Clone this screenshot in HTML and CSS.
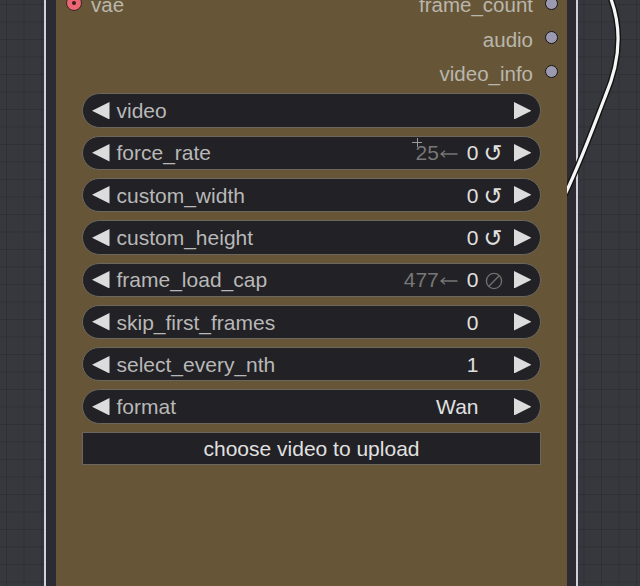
FILE: index.html
```html
<!DOCTYPE html>
<html>
<head>
<meta charset="utf-8">
<link rel="stylesheet" href="styles.css">
</head>
<body>
<div class="canvas">
  <div class="selection">
    <div class="node">
      <div class="slots">
        <div class="slot-row">
          <div class="slot-in"><span class="dot dot-vae"></span><span class="slot-label">vae</span></div>
          <div class="slot-out"><span class="slot-label">frame_count</span><span class="dot"></span></div>
        </div>
        <div class="slot-row">
          <div class="slot-in"></div>
          <div class="slot-out"><span class="slot-label">audio</span><span class="dot"></span></div>
        </div>
        <div class="slot-row">
          <div class="slot-in"></div>
          <div class="slot-out"><span class="slot-label">video_info</span><span class="dot"></span></div>
        </div>
      </div>
      <div class="widgets">
        <div class="pill">
          <svg class="arr" viewBox="0 0 17.5 17.5"><polygon points="17.5,0 0,8.75 17.5,17.5"/></svg>
          <span class="label">video</span>
          <span class="fill"></span>
          <span class="icon"></span>
          <svg class="arr" viewBox="0 0 17.5 17.5"><polygon points="0,0 17.5,8.75 0,17.5"/></svg>
        </div>
        <div class="pill">
          <svg class="arr" viewBox="0 0 17.5 17.5"><polygon points="17.5,0 0,8.75 17.5,17.5"/></svg>
          <span class="label">force_rate</span>
          <span class="fill"></span>
          <span class="hint">25<svg class="larrow" viewBox="0 0 18 10"><path d="M17.5,5 H1 M5,1.8 L1,5 L5,8.2"/></svg></span>
          <span class="val">0</span>
          <span class="icon">↺</span>
          <svg class="arr" viewBox="0 0 17.5 17.5"><polygon points="0,0 17.5,8.75 0,17.5"/></svg>
        </div>
        <div class="pill">
          <svg class="arr" viewBox="0 0 17.5 17.5"><polygon points="17.5,0 0,8.75 17.5,17.5"/></svg>
          <span class="label">custom_width</span>
          <span class="fill"></span>
          <span class="val">0</span>
          <span class="icon">↺</span>
          <svg class="arr" viewBox="0 0 17.5 17.5"><polygon points="0,0 17.5,8.75 0,17.5"/></svg>
        </div>
        <div class="pill">
          <svg class="arr" viewBox="0 0 17.5 17.5"><polygon points="17.5,0 0,8.75 17.5,17.5"/></svg>
          <span class="label">custom_height</span>
          <span class="fill"></span>
          <span class="val">0</span>
          <span class="icon">↺</span>
          <svg class="arr" viewBox="0 0 17.5 17.5"><polygon points="0,0 17.5,8.75 0,17.5"/></svg>
        </div>
        <div class="pill">
          <svg class="arr" viewBox="0 0 17.5 17.5"><polygon points="17.5,0 0,8.75 17.5,17.5"/></svg>
          <span class="label">frame_load_cap</span>
          <span class="fill"></span>
          <span class="hint">477<svg class="larrow" viewBox="0 0 18 10"><path d="M17.5,5 H1 M5,1.8 L1,5 L5,8.2"/></svg></span>
          <span class="val">0</span>
          <span class="icon"><svg class="noicon" viewBox="0 0 18 18"><circle cx="9" cy="9" r="7.6"/><path d="M3.6,14.4 L14.4,3.6"/></svg></span>
          <svg class="arr" viewBox="0 0 17.5 17.5"><polygon points="0,0 17.5,8.75 0,17.5"/></svg>
        </div>
        <div class="pill">
          <svg class="arr" viewBox="0 0 17.5 17.5"><polygon points="17.5,0 0,8.75 17.5,17.5"/></svg>
          <span class="label">skip_first_frames</span>
          <span class="fill"></span>
          <span class="val">0</span>
          <span class="icon"></span>
          <svg class="arr" viewBox="0 0 17.5 17.5"><polygon points="0,0 17.5,8.75 0,17.5"/></svg>
        </div>
        <div class="pill">
          <svg class="arr" viewBox="0 0 17.5 17.5"><polygon points="17.5,0 0,8.75 17.5,17.5"/></svg>
          <span class="label">select_every_nth</span>
          <span class="fill"></span>
          <span class="val">1</span>
          <span class="icon"></span>
          <svg class="arr" viewBox="0 0 17.5 17.5"><polygon points="0,0 17.5,8.75 0,17.5"/></svg>
        </div>
        <div class="pill">
          <svg class="arr" viewBox="0 0 17.5 17.5"><polygon points="17.5,0 0,8.75 17.5,17.5"/></svg>
          <span class="label">format</span>
          <span class="fill"></span>
          <span class="val">Wan</span>
          <span class="icon"></span>
          <svg class="arr" viewBox="0 0 17.5 17.5"><polygon points="0,0 17.5,8.75 0,17.5"/></svg>
        </div>
        <div class="upload">choose video to upload</div>
      </div>
    </div>
  </div>
  <svg class="wire" width="640" height="586" viewBox="0 0 640 586">
    <path class="wire-shadow" d="M609,-6 C622,25 621,60 605,97 C594,125 580,165 560,205"/>
    <path class="wire-line" d="M609,-6 C622,25 621,60 605,97 C594,125 580,165 560,205"/>
  </svg>
  <div class="cursor"></div>
</div>
</body>
</html>
```

FILE: styles.css
```css
html, body {
  margin: 0;
  padding: 0;
  background: #37373e;
}

.canvas {
  position: relative;
  width: 640px;
  height: 586px;
  overflow: hidden;
  box-sizing: border-box;
  padding-left: 44px;
  background-color: #37373e;
  background-image:
    linear-gradient(to right, rgba(0,0,0,0.13) 1px, transparent 1px),
    linear-gradient(to bottom, rgba(0,0,0,0.13) 1px, transparent 1px);
  background-size: 17.5px 17.5px;
  background-position: 6px 4px;
  font-family: "Liberation Sans", "DejaVu Sans", Arial, sans-serif;
}

.selection {
  width: 534px;
  height: 586px;
  box-sizing: border-box;
  border-left: 2px solid #cfd0dc;
  border-right: 2px solid #cfd0dc;
  padding: 0 9px 0 10px;
  background: #2c2b33;
}

.node {
  position: relative;
  z-index: 2;
  display: flow-root;
  height: 100%;
  background: #665637;
}

.slots {
  margin-top: -14px;
  padding: 0 9.5px 0 10px;
}

.slot-row {
  display: flex;
  justify-content: space-between;
  align-items: center;
  height: 34.3px;
}

.slot-in, .slot-out {
  display: flex;
  align-items: center;
}

.slot-label {
  font-size: 20.5px;
  line-height: 1;
  color: #bab6ad;
  padding-top: 5px;
}

.slot-in .slot-label {
  margin-left: 9px;
}

.slot-out .slot-label {
  margin-right: 11.5px;
}

.dot {
  display: block;
  width: 13px;
  height: 13px;
  box-sizing: border-box;
  border-radius: 50%;
  background: #9c9ab1;
  border: 1.5px solid #141416;
}

.dot-vae {
  position: relative;
  width: 16px;
  height: 16px;
  background: #ec6673;
  border: 1px solid #3a2525;
}

.dot-vae::after {
  content: "";
  position: absolute;
  left: 5px;
  top: 5px;
  width: 4px;
  height: 4px;
  border-radius: 50%;
  background: #3a1c20;
}

.widgets {
  margin-top: 4.5px;
  padding: 0 26px;
  display: flex;
  flex-direction: column;
  gap: 8px;
}

.pill {
  display: flex;
  align-items: center;
  height: 34.3px;
  box-sizing: border-box;
  border: 1.5px solid #6c675e;
  border-radius: 18px;
  background: #222125;
  padding: 0 9px;
  font-size: 21px;
  line-height: 1;
}

.arr {
  width: 17.5px;
  height: 17.5px;
  flex: none;
  fill: #dcdcdc;
}

.label {
  margin-left: 7px;
  color: #b8b8b8;
  white-space: nowrap;
}

.fill {
  flex: 1;
}

.hint {
  display: flex;
  align-items: center;
  color: #787878;
  margin-right: 9px;
  white-space: nowrap;
}

.larrow {
  width: 18px;
  height: 10px;
  margin-left: 1px;
  margin-top: 3px;
  fill: none;
  stroke: #787878;
  stroke-width: 1.3;
}

.val {
  color: #e0e0e0;
}

.icon {
  display: flex;
  align-items: center;
  width: 35px;
  height: 22px;
  flex: none;
  box-sizing: border-box;
  padding-left: 5px;
  padding-top: 2px;
  color: #e0e0e0;
  font-family: "DejaVu Sans", sans-serif;
  font-size: 23px;
}

.noicon {
  width: 18px;
  height: 18px;
  margin-left: 1px;
  fill: none;
  stroke: #6e6e6e;
  stroke-width: 1.4;
}

.upload {
  height: 33.5px;
  box-sizing: border-box;
  border: 1.5px solid #6c675e;
  background: #222125;
  color: #e0e0e0;
  font-size: 21px;
  display: flex;
  align-items: center;
  justify-content: center;
}

.wire {
  position: absolute;
  left: 0;
  top: 0;
  z-index: 1;
}

.wire-shadow {
  fill: none;
  stroke: #141414;
  stroke-width: 6;
}

.wire-line {
  fill: none;
  stroke: #f6f6f6;
  stroke-width: 3.2;
}

.cursor {
  position: absolute;
  z-index: 3;
  left: 412px;
  top: 138px;
  width: 10px;
  height: 9px;
  background:
    linear-gradient(#9a9a9a, #9a9a9a) center / 1px 100% no-repeat,
    linear-gradient(#9a9a9a, #9a9a9a) center / 100% 1px no-repeat;
}
```
